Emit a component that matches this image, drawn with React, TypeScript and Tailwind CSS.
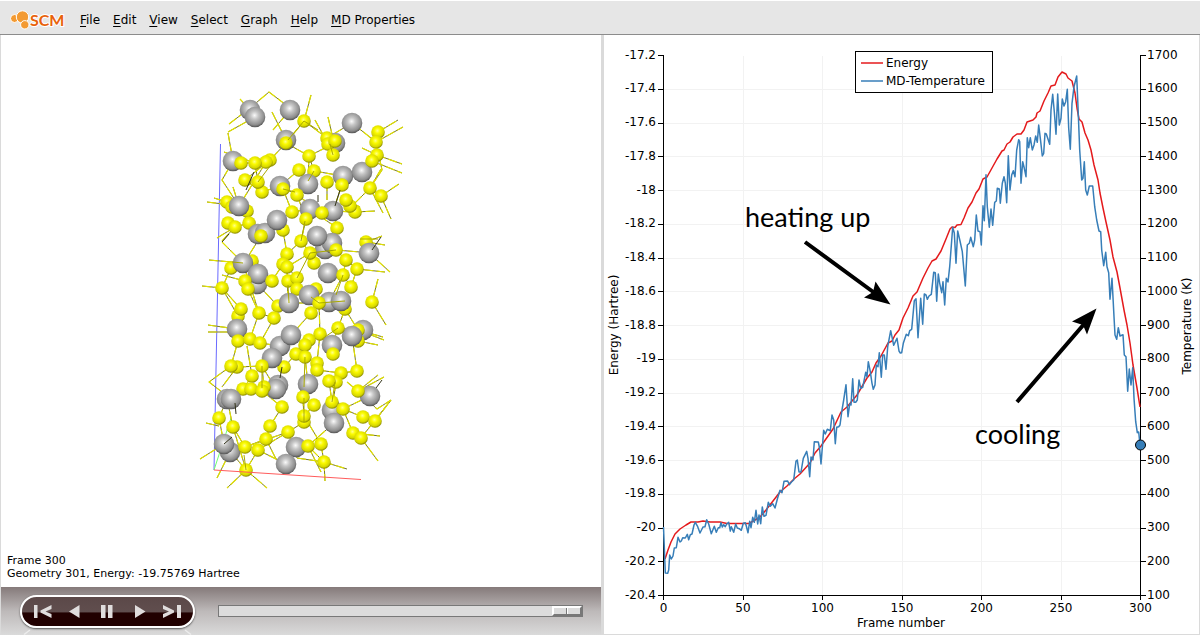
import type { ReactNode } from "react";

const menuItems = [
  "File",
  "Edit",
  "View",
  "Select",
  "Graph",
  "Help",
  "MD Properties",
];

type Atom = [kind: "M" | "S", x: number, y: number];

// M = metal (grey), S = sulfur (yellow), listed from back to front
const atoms: Atom[] = [
  ["M", 250, 110], ["M", 255, 117], ["M", 290, 110], ["S", 304, 121],
  ["M", 286, 140], ["S", 286, 143], ["M", 335, 143], ["M", 352, 123],
  ["S", 327, 138], ["S", 328, 144], ["S", 335, 141], ["S", 333, 155],
  ["S", 378, 132], ["S", 376, 142], ["S", 309, 156], ["S", 377, 155],
  ["M", 233, 161], ["S", 270, 160], ["S", 266, 162], ["S", 241, 163],
  ["S", 245, 180], ["S", 255, 163], ["S", 262, 192], ["S", 258, 182],
  ["S", 299, 170], ["S", 314, 171], ["M", 343, 176], ["M", 362, 172],
  ["S", 372, 161], ["M", 308, 184], ["S", 327, 182], ["M", 280, 186],
  ["S", 283, 189], ["S", 297, 195], ["S", 342, 185], ["S", 370, 188],
  ["S", 381, 196], ["S", 227, 202], ["S", 232, 207], ["S", 247, 211],
  ["M", 239, 206], ["S", 355, 212], ["S", 350, 206], ["S", 346, 200],
  ["M", 310, 209], ["M", 333, 211], ["S", 292, 212], ["S", 306, 219],
  ["S", 322, 213], ["S", 337, 228], ["S", 228, 223], ["S", 249, 223],
  ["S", 235, 227], ["S", 283, 230], ["M", 258, 234], ["M", 265, 233],
  ["S", 261, 236], ["M", 277, 220], ["S", 301, 241], ["M", 325, 249],
  ["M", 332, 243], ["S", 314, 263], ["S", 310, 253], ["M", 317, 236],
  ["S", 336, 250], ["S", 346, 260], ["S", 366, 242], ["M", 369, 253],
  ["S", 287, 254], ["S", 283, 264], ["S", 287, 267], ["S", 231, 268],
  ["S", 252, 261], ["M", 243, 263], ["M", 257, 284], ["M", 258, 274],
  ["S", 245, 281], ["S", 248, 289], ["S", 272, 281], ["S", 288, 281],
  ["S", 297, 278], ["S", 316, 289], ["S", 297, 289], ["M", 328, 273],
  ["S", 343, 275], ["S", 357, 269], ["S", 351, 287], ["S", 222, 288],
  ["M", 309, 295], ["S", 278, 306], ["M", 289, 303], ["M", 329, 302],
  ["S", 345, 309], ["M", 341, 301], ["S", 319, 303], ["S", 311, 313],
  ["S", 372, 302], ["S", 259, 313], ["S", 274, 318], ["S", 238, 316],
  ["S", 241, 309], ["M", 237, 329], ["S", 238, 341], ["S", 250, 339],
  ["S", 260, 343], ["M", 363, 330], ["S", 358, 330], ["S", 358, 341],
  ["M", 352, 336], ["S", 320, 334], ["M", 332, 345], ["S", 338, 328],
  ["M", 280, 346], ["S", 296, 354], ["S", 309, 340], ["S", 305, 345],
  ["M", 291, 335], ["S", 305, 357], ["S", 333, 354], ["S", 284, 367],
  ["M", 272, 358], ["S", 317, 363], ["S", 317, 370], ["S", 357, 371],
  ["S", 237, 367], ["S", 231, 366], ["S", 262, 366], ["S", 252, 376],
  ["S", 341, 373], ["M", 278, 385], ["M", 276, 389], ["S", 243, 389],
  ["S", 251, 389], ["S", 264, 387], ["S", 262, 391], ["M", 308, 384],
  ["S", 336, 382], ["S", 329, 381], ["S", 303, 397], ["S", 314, 405],
  ["M", 227, 399], ["M", 231, 399], ["M", 370, 396], ["S", 358, 391],
  ["M", 332, 410], ["S", 332, 402], ["S", 343, 409], ["M", 334, 423],
  ["S", 282, 407], ["S", 304, 422], ["S", 304, 416], ["S", 270, 426],
  ["S", 288, 432], ["S", 219, 418], ["S", 233, 427], ["S", 363, 417],
  ["S", 375, 421], ["S", 353, 433], ["S", 361, 438], ["S", 266, 439],
  ["M", 230, 452], ["M", 224, 444], ["S", 245, 447], ["S", 258, 450],
  ["M", 296, 447], ["S", 321, 444], ["S", 308, 446], ["M", 286, 464],
  ["S", 324, 462], ["S", 246, 470],
];

// bonds behind the atoms
const bonds =
  "M240 99L250 110M250 108L269 92L290 108M229 124L250 108M272 112L286 140M273 130L290 110M228 132L255 117M228 133L233 161L222 180L239 206" +
  "M311 95L304 121L286 143M304 121L327 138L352 123L376 142M315 120L327 142M328 117L334 143M309 156L335 143M286 143L309 156L314 171" +
  "M286 143L270 160L255 163L241 163M255 163L258 182L262 192L280 186M270 160L245 180M224 152L255 163M245 180L262 192M266 162L239 206" +
  "M309 156L308 184L299 170L280 186L297 195L322 213M378 132L398 120M376 142L403 127M376 142L377 155L372 161L402 173M377 155L402 164M362 148L377 155" +
  "M314 171L343 176M378 132L376 142L382 170L370 188L381 196M381 196L399 184M381 196L391 219M370 188L383 213M362 172L372 161M381 169L370 188" +
  "M327 182L327 200M342 185L333 211L355 212L375 211M346 200L360 207M370 188L346 212M283 189L292 212L310 209M214 198L227 202M207 202L239 206M233 187L239 206" +
  "M217 238L235 227M222 241L235 227M222 242L243 263M239 206L249 223L258 234M249 223L235 227M277 220L292 212M283 230L277 220M283 230L287 254M297 195L306 219L301 241" +
  "M310 209L337 228L333 211M301 241L287 254L283 264L272 281L252 261M301 241L310 253L336 250M310 253L287 267L297 278L288 303M336 250L346 260L357 269L385 272" +
  "M336 250L360 252M346 260L343 275L351 287L357 269M328 273L343 275L329 302M209 260L243 263M222 275L245 281M202 286L222 288L231 268M222 288L241 309" +
  "M222 288L238 316M231 268L243 263L272 281M261 236L249 255M257 284L278 306M248 289L259 313L274 318M248 289L245 281M366 242L382 236M366 242L385 245" +
  "M369 253L390 272M378 279L372 302L386 325M297 289L289 303L319 303L341 301M287 267L288 303M319 303L311 313M319 303L320 334L305 345M345 309L358 330" +
  "M311 313L291 335M345 309L338 328L332 345M338 328L363 330M208 325L237 329M208 332L237 332M241 309L230 336M241 309L238 341L231 366M259 313L250 339L260 343" +
  "M274 318L260 343L280 346M259 313L243 263M358 330L383 337M358 341L378 345M352 336L357 371L341 373M358 330L384 340M237 329L238 341M237 329L260 343" +
  "M291 335L305 345L305 357L308 384M320 334L317 363L305 357M333 354L320 334M296 354L284 367L272 358M237 367L262 366L264 387M231 366L209 382L231 399" +
  "M237 367L222 387M247 346L252 376L243 389M252 376L262 366M262 366L276 389M317 370L341 373L329 381L332 402M336 382L332 410M303 397L308 384" +
  "M262 391L282 407L270 426L266 439M251 389L264 387M227 399L233 427L245 447M219 418L227 399M219 418L224 444M206 423L219 426M303 397L304 422L288 432" +
  "M314 405L304 416L321 444M343 409L370 396M343 409L363 417L375 421M343 409L353 433L361 438M358 391L378 375M358 391L384 377M358 391L377 409L391 400L375 421" +
  "M347 382L358 391M361 438L391 400M353 433L380 436M361 438L378 461M334 423L308 446M200 459L224 444M217 478L230 452M224 444L245 447L288 432L297 458" +
  "M233 427L246 470M246 470L227 488M246 470L267 488M258 450L246 470M258 450L286 464M266 439L276 459L286 464M258 450L288 432M297 458L324 462L308 446" +
  "M324 462L347 469M324 462L325 481M321 444L324 462M308 446L321 472M296 447L308 446M245 447L266 439M224 444L246 470";

// bonds that pass over the atoms
const frontBonds =
  "M304 121L288 140M304 121L318 130M333 155L330 144M258 182L270 166M283 189L295 192M314 171L308 181M360 239L378 239" +
  "M243 263L232 262M289 303L288 285M310 253L297 278M336 250L310 253M338 328L319 341M319 303L311 297M305 357L304 387" +
  "M332 402L335 382M262 366L262 388M304 422L304 398M319 303L345 301M343 275L336 295M301 241L305 221M246 470L244 455";

const darkBonds =
  "M381 237L372 250M229 234L222 242M318 195L318 202M340 190L335 206M282 367L280 378M254 172L246 190M382 380L376 388M235 403L236 414M232 437L224 444";

type Point = [number, number];

const energy: Point[] = [
  [665, 559], [668, 550], [671, 542], [675, 534], [680, 529], [686, 525],
  [691, 522], [698, 522], [703, 521], [710, 522], [720, 522], [727, 523.5],
  [740, 523.5], [749, 523.5], [755, 520], [760, 517], [766, 510],
  [773, 501], [780, 492], [787, 486], [794, 479], [800, 474], [810, 463],
  [815, 453], [821, 446], [833, 429], [841, 412], [847, 407], [852, 401],
  [857, 395], [867, 378], [872, 372], [876, 363], [881, 356], [888, 343],
  [892, 341], [895, 335], [899, 330], [903, 318], [908, 308], [913, 296],
  [917, 292], [923, 278], [928, 268], [932, 261], [936, 259], [941, 251],
  [946, 239], [950, 229], [952, 227], [955, 227.5], [957, 225],
  [961, 224.5], [964, 218], [968, 208], [972, 202], [976, 193], [979, 189],
  [983, 179], [987, 177], [992, 168], [997, 159], [1002, 151], [1004, 150],
  [1007, 144], [1010, 142], [1013, 137], [1017, 134], [1021, 134],
  [1024, 130], [1027, 122], [1033, 120], [1036, 117], [1037, 113],
  [1040, 111], [1044, 101], [1048, 93], [1051, 86], [1055, 85], [1058, 77],
  [1062, 72], [1066, 74], [1068, 78], [1072, 81], [1075, 93], [1077, 108],
  [1079, 119], [1082, 122], [1085, 133], [1088, 140], [1091, 150],
  [1094, 165], [1098, 180], [1100, 193], [1103, 208], [1106, 222],
  [1110, 240], [1113, 257], [1117, 272], [1120, 288], [1124, 310],
  [1127, 325], [1130, 343], [1133, 365], [1137, 388], [1140, 407],
];

const temperature: Point[] = [
  [663.5, 527], [664.3, 547], [665.3, 573], [667.7, 573.3], [668.7, 570],
  [669.7, 555], [671.3, 559], [673, 556], [674.3, 548], [676.3, 547.7],
  [678, 537.3], [680, 542], [681.3, 541], [682.7, 537.7], [685.3, 538],
  [687.3, 534.3], [688.7, 539.7], [690.3, 534.7], [692, 534], [694, 525],
  [695.3, 522.3], [697.7, 526.7], [700, 533], [703, 527], [705, 526.7],
  [706.7, 519.7], [708.7, 524], [711.3, 533.7], [714.3, 526.3],
  [716.3, 532.3], [718.3, 527.7], [719.7, 527.7], [721, 522.7],
  [722.3, 527], [723.7, 524.7], [725.3, 526.7], [726.7, 524],
  [728.7, 522.3], [730.3, 531], [731.3, 526.7], [733.7, 532.3],
  [735.7, 524], [737.3, 528], [739.3, 528.7], [741.3, 530.3],
  [743.3, 523.3], [745.3, 522.7], [746.3, 526], [748, 532.7],
  [749.7, 521.3], [751, 527.7], [752.7, 517.3], [754.3, 522.3],
  [756, 510.3], [757.7, 524], [759, 515], [760.7, 523.7], [762.3, 507],
  [764, 516.3], [766, 515.3], [768.3, 502.3], [770.3, 506.3],
  [772.7, 503.7], [775, 508], [777.7, 497.7], [780, 490.3], [782, 492.7],
  [784, 481.3], [787.7, 481], [789.3, 484.7], [791.7, 481.7], [793.7, 480],
  [796, 461], [797.3, 460], [799, 472], [801, 472], [803.3, 458.3],
  [806.7, 451.3], [808, 458.3], [809.7, 476.7], [811, 457], [813, 460],
  [814.3, 441.7], [818.3, 442], [819.5, 448], [821, 464], [823.7, 430.3],
  [825.3, 434], [827.3, 429.3], [830.3, 430.7], [832, 415], [833.7, 420],
  [835.3, 443.7], [836.7, 427.3], [838.7, 426.7], [840, 425], [842, 410],
  [843.7, 400], [846, 384.7], [848, 416.7], [849.7, 404], [851, 405],
  [852.7, 378.7], [854, 402.3], [855.7, 402.3], [857.3, 400], [859, 380],
  [860.7, 388.3], [862.7, 387.3], [865.7, 372.3], [867, 376.7],
  [868.3, 361.7], [870.3, 371.7], [872, 383.3], [873.3, 389.3], [875, 385],
  [876.3, 365], [878, 366.7], [879.3, 352.7], [881.3, 377.3], [882.7, 355],
  [884.3, 355], [886, 369.3], [887.7, 346.7], [890.7, 330.7],
  [893.7, 345.3], [897, 338.3], [899, 351], [900.3, 353], [901.7, 352.7],
  [903.3, 343.3], [906.3, 334.3], [908.3, 335.7], [909.7, 330.7],
  [911.7, 329.3], [914.3, 300.7], [916, 298.7], [918, 337.7],
  [920.7, 298.3], [922.7, 324.3], [924.3, 294], [926, 295],
  [927.3, 299.3], [929, 296], [931.3, 294.3], [933.7, 272.3],
  [935.3, 272.7], [936.7, 301.3], [938.3, 274], [939.7, 283.3],
  [941.7, 292.7], [943, 281.7], [944.7, 305], [946.3, 278.3], [948, 282],
  [949.7, 266.7], [952.7, 227.3], [954.3, 233], [956, 263.3], [957.7, 231],
  [960, 241], [962.3, 251.7], [965.3, 286], [967.3, 245], [969.3, 243.3],
  [970.7, 237.3], [973.3, 246.7], [974.7, 240], [976.3, 215], [978, 231],
  [980, 231.7], [981.3, 245], [983, 205.7], [984.3, 220.7], [986, 174.7],
  [987.3, 206.7], [989.3, 227.3], [991, 209], [992.7, 225.3],
  [994.7, 202.3], [996.3, 201], [997.3, 188.3], [999.3, 189],
  [1000.3, 203.3], [1002.3, 183.3], [1004, 176.7], [1005.3, 183],
  [1006.7, 202.7], [1008.3, 155.7], [1010, 190], [1011.7, 175],
  [1013.3, 170.7], [1015, 176.7], [1016.7, 150], [1018.7, 139.7],
  [1019.7, 141.7], [1021, 183.3], [1022.7, 161.7], [1024.3, 168.3],
  [1026, 176.7], [1027.3, 137.7], [1028.7, 147.7], [1030.3, 137.7],
  [1032.3, 150], [1034, 145], [1035.7, 136], [1037.3, 142.3],
  [1038.7, 125], [1040.7, 141.7], [1042.3, 156], [1043.7, 153.3],
  [1045, 133.3], [1046.3, 134], [1049.7, 144.3], [1051, 110],
  [1052.7, 94.3], [1054.3, 111.7], [1056, 134.3], [1057.7, 94],
  [1059.3, 125], [1061, 118.3], [1062.3, 99], [1064, 106],
  [1065.7, 101.7], [1067.3, 89.3], [1068.7, 128.3], [1070.3, 149.3],
  [1072, 103.3], [1074, 86.7], [1076.7, 76], [1078, 106.7], [1079.7, 150],
  [1081.7, 180], [1083, 178.3], [1084.3, 161.7], [1085.7, 190],
  [1087.3, 195], [1089.3, 186], [1092.7, 186], [1094.7, 206.7],
  [1096.7, 220], [1099, 231], [1100.7, 231.7], [1101.7, 250],
  [1103.7, 265.7], [1105.7, 252.3], [1107, 266.7], [1108.7, 272.7],
  [1110, 299.3], [1112, 278.3], [1114, 316.7], [1115, 335],
  [1116.7, 339.3], [1118.3, 327.7], [1120, 336], [1123, 334.7],
  [1124.3, 355], [1126, 356.7], [1127.7, 391.3], [1129.3, 369],
  [1131, 385], [1132.7, 367.7], [1134, 398.3], [1135.7, 421.7],
  [1137.3, 432.7], [1138.7, 432], [1140, 445],
];

const yTicks = Array.from({ length: 17 }, (_, i) => ({
  y: 55.5 + i * 33.75,
  energy: String(Number((-17.2 - i * 0.2).toFixed(1))),
  temperature: String(1700 - i * 100),
}));

const xTicks = Array.from({ length: 7 }, (_, i) => ({
  x: 663.5 + i * 79.5,
  label: String(i * 50),
}));

const toPoints = (data: Point[]) => data.map((p) => p.join(",")).join(" ");

function Logo() {
  return (
    <svg viewBox="0 0 56 22" className="h-[22px] w-14" role="img">
      <g fill="#f39a32" stroke="#fff">
        <circle cx="4.500" cy="9.500" r="4" />
        <circle cx="12.500" cy="8" r="6.200" />
        <circle cx="14.800" cy="15.800" r="4.200" />
      </g>
      <text
        x="20"
        y="17"
        fill="#e8620a"
        stroke="#fff"
        strokeWidth="2"
        paintOrder="stroke"
        fontSize="16"
        fontWeight="bold"
        fontFamily="Lato, 'Open Sans', sans-serif"
      >
        SCM
      </text>
    </svg>
  );
}

function MenuBar() {
  return (
    <nav className="flex h-[35px] items-center border-t border-b border-t-white border-b-[#8c8c8c] bg-[#e6e6e6] pt-1 pl-[10px]">
      <Logo />
      <div className="ml-2 flex gap-px">
        {menuItems.map((item) => (
          <button
            key={item}
            type="button"
            className="px-[6px] text-[12px] leading-5 whitespace-nowrap"
          >
            <span className="underline underline-offset-2">{item[0]}</span>
            {item.slice(1)}
          </button>
        ))}
      </div>
    </nav>
  );
}

function Molecule() {
  return (
    <svg viewBox="1 35 600 519" className="block w-full">
      <defs>
        <radialGradient id="metal" cx="0.48" cy="0.42" r="0.62">
          <stop offset="0" stopColor="#fafafa" />
          <stop offset="0.3" stopColor="#c6c6c6" />
          <stop offset="0.75" stopColor="#8c8c8c" />
          <stop offset="1" stopColor="#3c3c3c" />
        </radialGradient>
        <radialGradient id="sulfur" cx="0.46" cy="0.4" r="0.66">
          <stop offset="0" stopColor="#ffff8a" />
          <stop offset="0.3" stopColor="#fbfb00" />
          <stop offset="0.7" stopColor="#d6d600" />
          <stop offset="1" stopColor="#5e5e00" />
        </radialGradient>
      </defs>
      <g fill="none">
        <path d="M220.500 144L214 470" stroke="#6a6aff" />
        <path d="M214 470L231 418" stroke="#6dff6d" />
        <path d={bonds} stroke="#77772a" />
        <path
          d={bonds}
          stroke="#e0e000"
          strokeWidth="1.2"
          strokeDasharray="9 3"
        />
      </g>
      {atoms.map(([kind, x, y], i) => (
        <circle
          key={i}
          cx={x}
          cy={y}
          r={kind === "M" ? 10.3 : 6.8}
          fill={kind === "M" ? "url(#metal)" : "url(#sulfur)"}
        />
      ))}
      <g fill="none">
        <path d={frontBonds} stroke="#a9a900" />
        <path d={darkBonds} stroke="#33331a" />
        <path d="M214 470L361 479.500" stroke="#ff5c5c" />
      </g>
    </svg>
  );
}

function PlayerButton({
  label,
  children,
}: {
  label: string;
  children: ReactNode;
}) {
  return (
    <button
      type="button"
      aria-label={label}
      className="flex h-full flex-1 items-center justify-center"
    >
      <svg viewBox="0 0 20 14" className="h-[14px] w-5" fill="#e0dddd">
        {children}
      </svg>
    </button>
  );
}

function Player() {
  return (
    <div className="flex h-12 items-start bg-linear-to-b from-[#857a7a] via-[#bdb9b9] to-[#dadada] pr-[18px] pl-[19px]">
      <div className="mt-2 w-[175px] shrink-0">
        <div className="flex h-[33px] rounded-full border-2 border-white bg-[linear-gradient(#5b4848,#604e4e_50%,#210000_56%,#210000)] px-1 shadow-[0_1px_2px_rgba(0,0,0,0.6)]">
          <PlayerButton label="First frame">
            <path d="M2 0h3.500v13H2zM19.500 0v4L13.500 6.500l6 2.500v4L8.500 7.500v-2z" />
          </PlayerButton>
          <PlayerButton label="Play backwards">
            <path d="M14.500 0v13L4 6.500z" />
          </PlayerButton>
          <PlayerButton label="Pause">
            <path d="M4 0h4.500v13H4zM11 0h4.500v13H11z" />
          </PlayerButton>
          <PlayerButton label="Play">
            <path d="M5 0v13l10.500-6.500z" />
          </PlayerButton>
          <PlayerButton label="Last frame">
            <path d="M14 0h4v13h-4zM0 0v4l6 2.500L0 9v4l11-5.500v-2z" />
          </PlayerButton>
        </div>
        <svg
          viewBox="0 0 175 7"
          className="block h-[7px] w-full"
          fill="none"
          stroke="#ececec"
          strokeWidth="1.500"
        >
          <path d="M10 2L4 6.500M165 2L171 6.500" />
        </svg>
      </div>
      <input
        type="range"
        aria-label="Frame"
        min={0}
        max={300}
        defaultValue={300}
        className="mt-[18px] ml-[23px] h-3 min-w-0 flex-1 appearance-none border border-[#787878] bg-[#dcdcdc] [&::-webkit-slider-thumb]:h-[10px] [&::-webkit-slider-thumb]:w-[30px] [&::-webkit-slider-thumb]:appearance-none [&::-webkit-slider-thumb]:border-2 [&::-webkit-slider-thumb]:border-t-white [&::-webkit-slider-thumb]:border-r-[#787878] [&::-webkit-slider-thumb]:border-b-[#787878] [&::-webkit-slider-thumb]:border-l-white [&::-webkit-slider-thumb]:bg-[linear-gradient(90deg,#dcdcdc_12px,#787878_12px,#787878_13px,#fff_13px,#fff_14px,#dcdcdc_14px)]"
      />
    </div>
  );
}

function Chart() {
  return (
    <svg
      viewBox="604 35 595 599"
      className="block w-full"
      fontSize="12"
      fontFamily="'DejaVu Sans', sans-serif"
    >
      <g stroke="#f2f2f2" shapeRendering="crispEdges">
        {yTicks.slice(1, -1).map((t) => (
          <line key={t.y} x1="664" x2="1140" y1={t.y} y2={t.y} />
        ))}
        {xTicks.slice(1, -1).map((t) => (
          <line key={t.x} x1={t.x} x2={t.x} y1="56" y2="595" />
        ))}
      </g>

      <g stroke="#000" shapeRendering="crispEdges">
        <path d="M663.500 55V600M1140.500 55V600M658 595.500H1146" />
        {yTicks.map((t) => (
          <path key={t.y} d={`M658 ${t.y}H663M1141 ${t.y}H1146`} />
        ))}
        {xTicks.map((t) => (
          <line key={t.x} x1={t.x} x2={t.x} y1="596" y2="600" />
        ))}
      </g>

      {yTicks.map((t) => (
        <g key={t.y}>
          <text x="656" y={Math.round(t.y + 3)} textAnchor="end">
            {t.energy}
          </text>
          <text x="1147" y={Math.round(t.y + 3)}>
            {t.temperature}
          </text>
        </g>
      ))}
      {xTicks.map((t) => (
        <text key={t.x} x={t.x} y="612" textAnchor="middle">
          {t.label}
        </text>
      ))}
      <text x="901" y="627" textAnchor="middle">
        Frame number
      </text>
      <text transform="translate(618 325) rotate(-90)" textAnchor="middle">
        Energy (Hartree)
      </text>
      <text transform="translate(1191 326) rotate(-90)" textAnchor="middle">
        Temperature (K)
      </text>

      <g fill="none" strokeWidth="1.500" strokeLinejoin="round">
        <polyline points={toPoints(energy)} stroke="#e41a1c" />
        <polyline points={toPoints(temperature)} stroke="#377eb8" />
      </g>
      <circle cx="1140.500" cy="445" r="5" fill="#377eb8" stroke="#000" />

      <rect x="855.500" y="51.500" width="137" height="41" fill="#fff" stroke="#000" />
      <path d="M861 63H883" stroke="#e41a1c" strokeWidth="1.500" />
      <path d="M861 81H883" stroke="#377eb8" strokeWidth="1.500" />
      <text x="886" y="67">
        Energy
      </text>
      <text x="886" y="85">
        MD-Temperature
      </text>

      <g stroke="#000" strokeWidth="4">
        <path d="M805 242L876 294M1017 402L1085 323" />
      </g>
      <path d="M890.500 304.500L875.500 281.500L873 292L864 297.500z" />
      <path d="M1096.500 308.500L1072 321.500L1083 325L1087 334.500z" />
      <g fontSize="27" fontFamily="Lato, sans-serif">
        <text x="745" y="227">
          heating up
        </text>
        <text x="975" y="444">
          cooling
        </text>
      </g>
    </svg>
  );
}

export default function App() {
  return (
    <div className="flex min-h-screen flex-col bg-[#dadada] font-['DejaVu_Sans',sans-serif] text-black">
      <MenuBar />
      <main className="grid flex-1 grid-cols-[601fr_599fr]">
        <section className="flex flex-col border-l border-[#dadada] bg-white">
          <Molecule />
          <div className="flex-1 px-[6px] text-[11px] leading-[13px]">
            <p>Frame 300</p>
            <p>Geometry 301, Energy: -19.75769 Hartree</p>
          </div>
          <Player />
        </section>
        <section className="border-r border-b border-l-3 border-[#dadada] bg-white">
          <Chart />
        </section>
      </main>
    </div>
  );
}
